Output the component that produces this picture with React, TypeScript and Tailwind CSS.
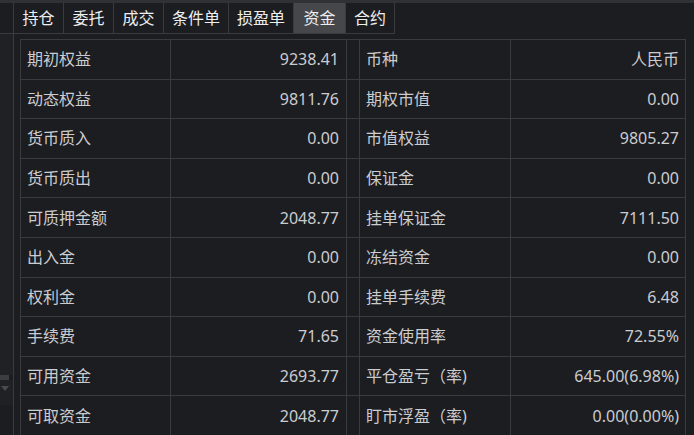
const tabs = [
  { name: "持仓", w: "w-[49px]" },
  { name: "委托", w: "w-[49px]" },
  { name: "成交", w: "w-[49px]" },
  { name: "条件单", w: "w-[64px]" },
  { name: "损盈单", w: "w-[64px]" },
  { name: "资金", w: "w-[51px]", active: true },
  { name: "合约", w: "w-[48px]" },
];

const rows: [string, string, string, string][] = [
  ["期初权益", "9238.41", "币种", "人民币"],
  ["动态权益", "9811.76", "期权市值", "0.00"],
  ["货币质入", "0.00", "市值权益", "9805.27"],
  ["货币质出", "0.00", "保证金", "0.00"],
  ["可质押金额", "2048.77", "挂单保证金", "7111.50"],
  ["出入金", "0.00", "冻结资金", "0.00"],
  ["权利金", "0.00", "挂单手续费", "6.48"],
  ["手续费", "71.65", "资金使用率", "72.55%"],
  ["可用资金", "2693.77", "平仓盈亏（率)", "645.00(6.98%)"],
  ["可取资金", "2048.77", "盯市浮盈（率)", "0.00(0.00%)"],
];

export default function App() {
  return (
    <div
      className="w-[694px] h-[435px] overflow-hidden bg-[#1c1d21] flex flex-col text-[16px] text-[#cbccd0]"
      style={{ fontFamily: '"Noto Sans", "Noto Sans CJK SC", sans-serif' }}
    >
      <div className="h-[3px] bg-[#303135] shrink-0" />

      {/* tab bar */}
      <div className="flex h-[31px] shrink-0">
        <div className="flex border-b border-r border-[#3a3b3f] h-full">
          <div className="w-[13px]" />
          {tabs.map((t) => (
            <div
              key={t.name}
              className={`${t.w} box-content border-l border-[#3a3b3f] flex items-center justify-center text-[#eeeeee] ${
                t.active ? "bg-[#46474b]" : ""
              }`}
            >
              {t.name}
            </div>
          ))}
        </div>
      </div>

      <div className="flex flex-1 min-h-0">
        {/* left strip */}
        <div className="w-[14px] shrink-0 border-r border-[#3a3b3f] flex flex-col">
          <div className="h-[341px] bg-[#202125]" />
          <div className="h-[5px] w-[9px] bg-[#3c3d41]" />
          <div className="h-[25px] bg-[#202125] flex justify-center pt-[6px] pr-[3px]">
            <div className="w-0 h-0 border-l-[4px] border-r-[4px] border-t-[5px] border-l-transparent border-r-transparent border-t-[#4a4b4f]" />
          </div>
        </div>

        {/* fund table */}
        <div className="pl-[6px] pt-[5px]">
          <div className="grid grid-cols-[149px_175px_12px_150px_174px] gap-px bg-[#3a3b3f] p-px">
            {rows.map((r) => (
              <Row key={r[0]} r={r} />
            ))}
          </div>
        </div>
      </div>
    </div>
  );
}

function Row({ r }: { r: [string, string, string, string] }) {
  return (
    <>
      <div className="h-[38.6px] bg-[#1c1d21] flex items-center pl-[6px]">{r[0]}</div>
      <div className="h-[38.6px] bg-[#1c1d21] flex items-center justify-end pr-[7px]">{r[1]}</div>
      <div className="h-[38.6px] bg-[#1c1d21]" />
      <div className="h-[38.6px] bg-[#1c1d21] flex items-center pl-[6px]">{r[2]}</div>
      <div className="h-[38.6px] bg-[#1c1d21] flex items-center justify-end pr-[6px]">{r[3]}</div>
    </>
  );
}
